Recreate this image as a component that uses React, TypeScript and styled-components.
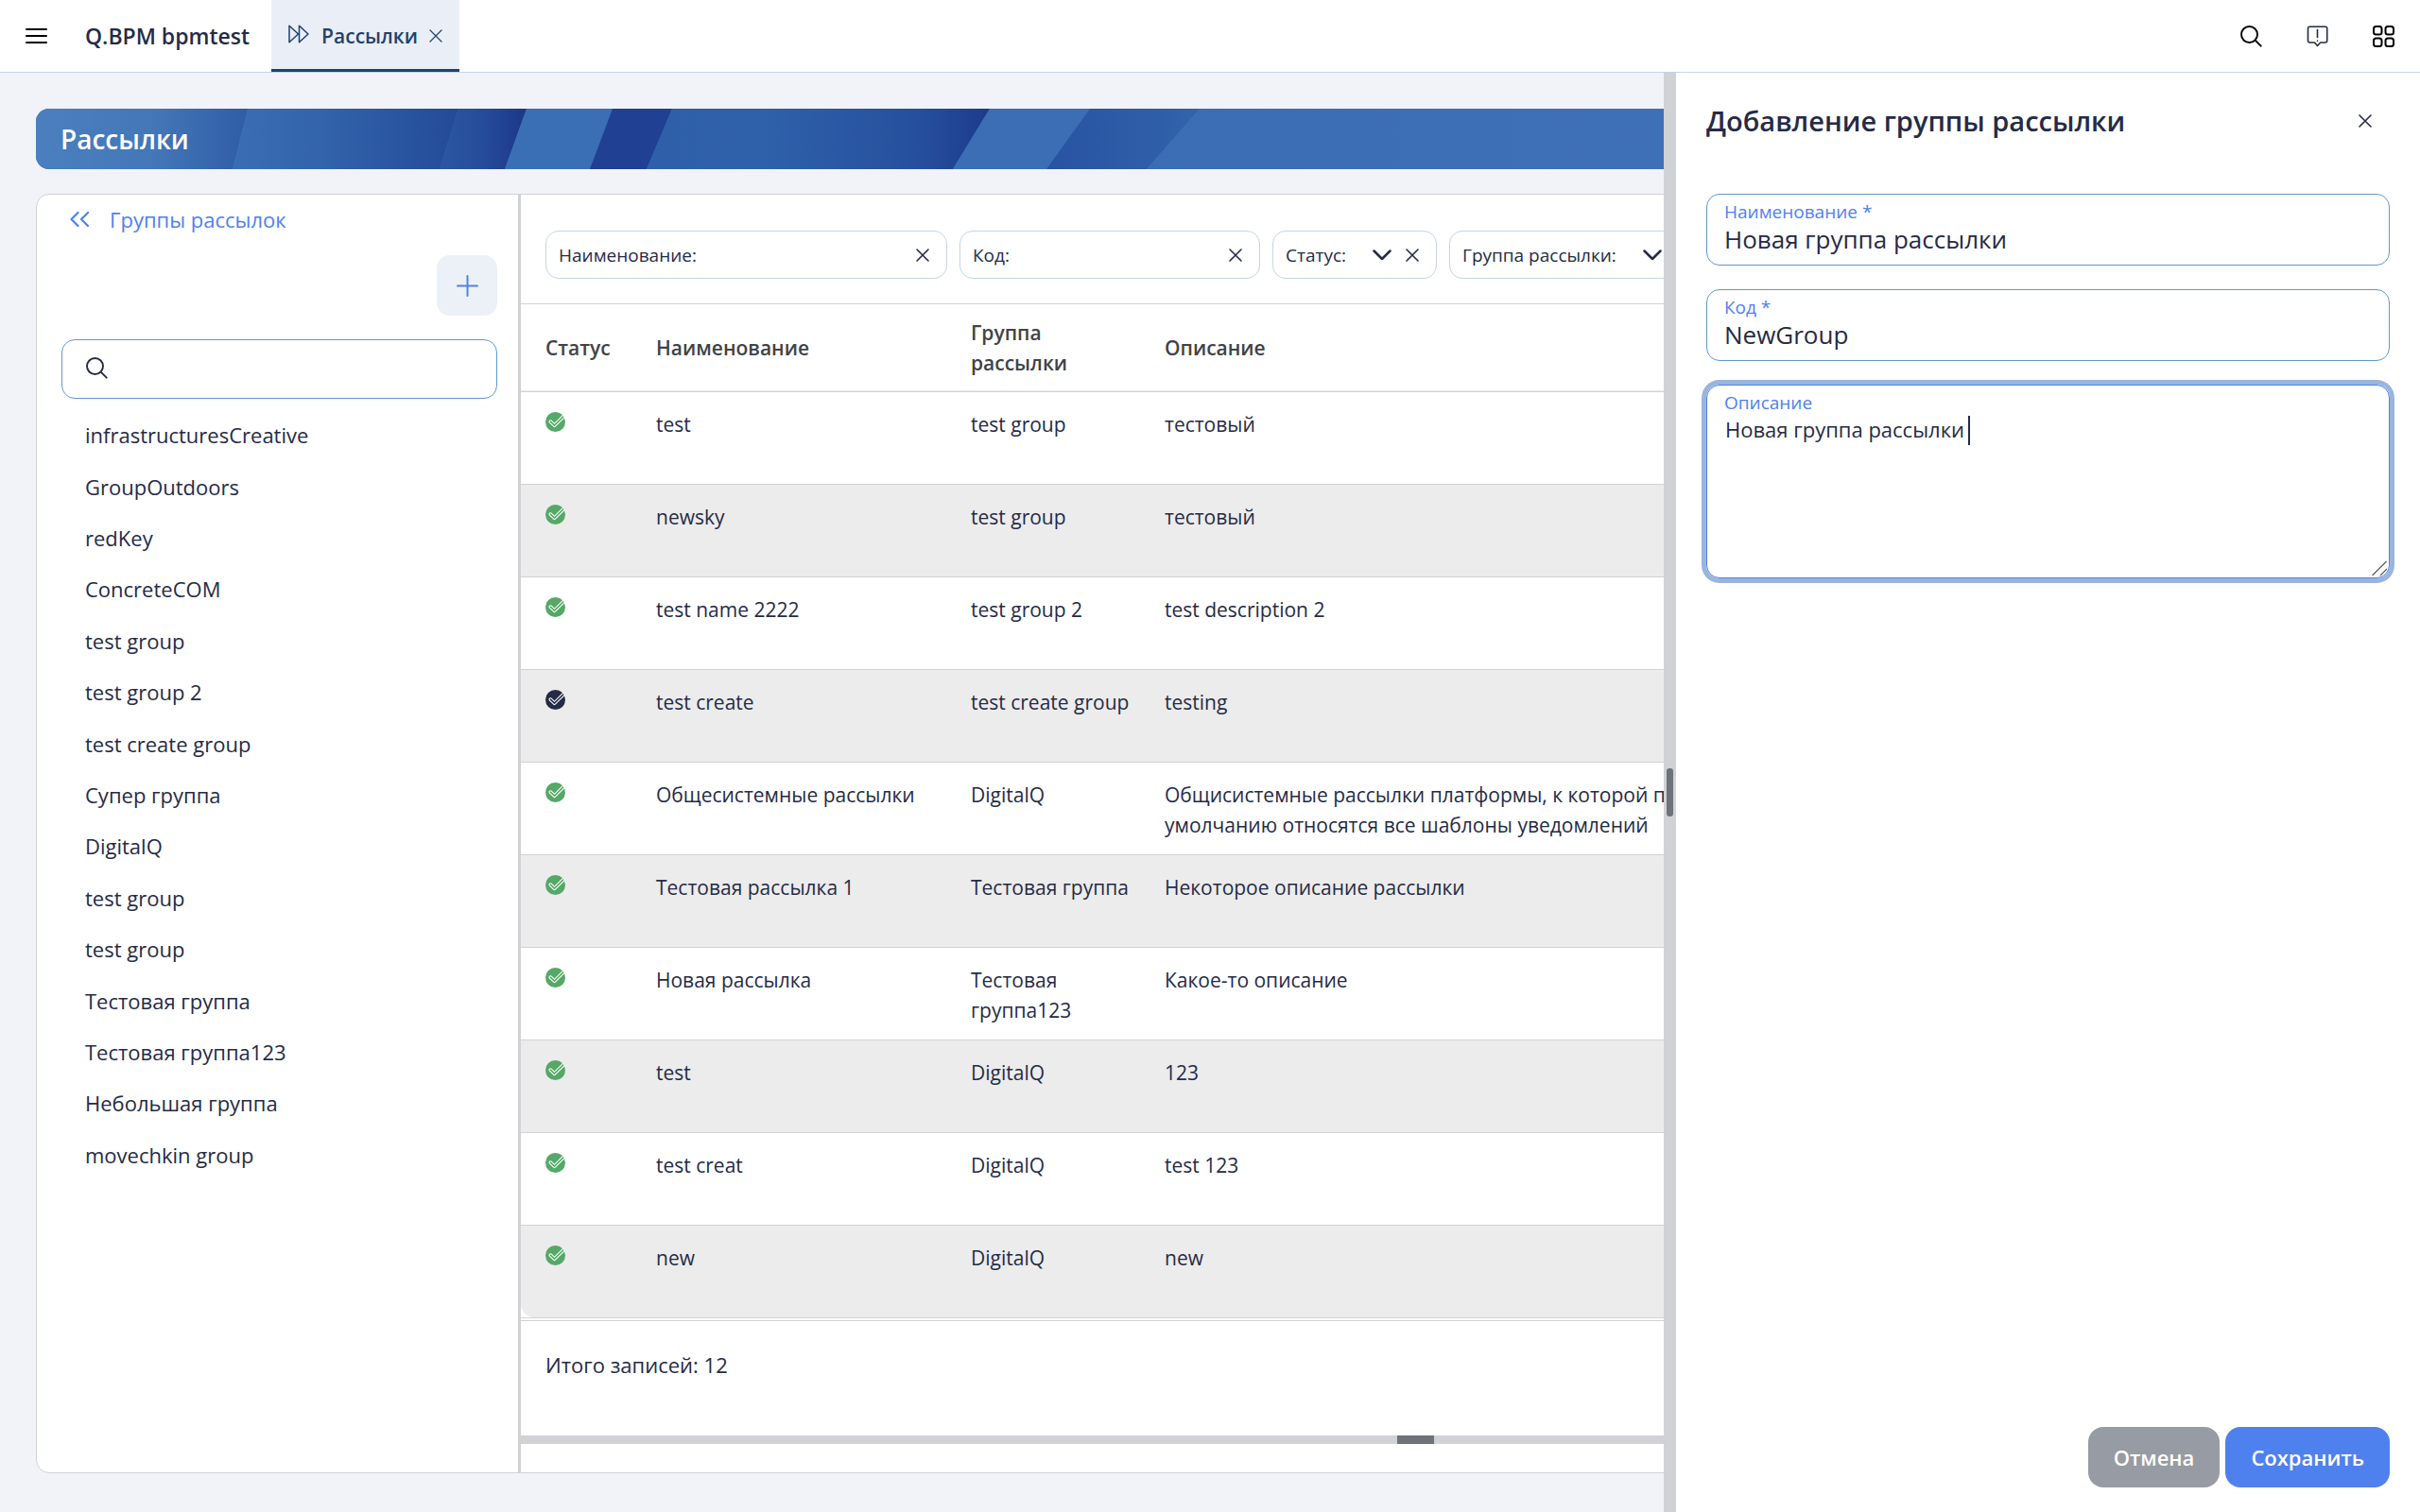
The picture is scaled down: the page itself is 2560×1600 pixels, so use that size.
import React from "react";
import styled, { createGlobalStyle } from "styled-components";

const ink = "#252b46";
const line = "#d0d2d5";
const accent = "#4f81ee";
const navy = "#1f426e";

const GlobalStyle = createGlobalStyle`
  *, *::before, *::after { box-sizing: border-box; }
  body { margin: 0; background: #f1f3f8; }
  body, button, input, select, textarea {
    font-family: "Open Sans", "Noto Sans", sans-serif;
    color: ${ink};
  }
  svg { display: block; flex: none; }
`;

const Page = styled.div`
  height: 100vh;
  display: flex;
  flex-direction: column;
  overflow: hidden;
`;

const PlainButton = styled.button`
  display: flex;
  align-items: center;
  justify-content: center;
  padding: 0;
  border: 0;
  background: none;
  color: inherit;
  cursor: pointer;
`;

/* ---------- top bar ---------- */

const TopBar = styled.header`
  flex: none;
  display: flex;
  align-items: stretch;
  height: 77px;
  padding: 0 27px;
  background: #fff;
  border-bottom: 1px solid #c3d5ea;
`;

const Brand = styled.div`
  display: flex;
  align-items: center;
  margin: 0 23px 0 40px;
  font-size: 23px;
  font-weight: 600;
  line-height: 32px;
`;

const Tab = styled.div`
  display: flex;
  align-items: center;
  gap: 12px;
  padding: 2px 18px 0;
  background: #eaeef6;
  border-bottom: 3px solid ${navy};
  color: ${navy};
`;

const TabLink = styled.a`
  display: flex;
  align-items: center;
  gap: 13px;
  color: inherit;
  font-size: 21px;
  font-weight: 600;
  line-height: 32px;
  text-decoration: none;
`;

const TopActions = styled.div`
  display: flex;
  align-items: center;
  gap: 47px;
  margin-left: auto;
`;

/* ---------- workspace ---------- */

const Body = styled.div`
  position: relative;
  flex: 1;
  min-height: 0;
  display: flex;
`;

const Workspace = styled.main`
  flex: 1;
  min-width: 0;
  display: flex;
  flex-direction: column;
  gap: 26px;
  padding: 38px 38px 41px;
`;

const Banner = styled.div`
  flex: none;
  display: grid;
  align-items: center;
  height: 64px;
  overflow: hidden;
  border-radius: 14px;
  background: #3b6db5;

  > * { grid-area: 1 / 1; }
`;

const BannerTitle = styled.h1`
  margin: 0;
  padding-left: 26px;
  color: #fff;
  font-size: 28px;
  font-weight: 600;
  line-height: 40px;
`;

const Card = styled.section`
  flex: 1;
  min-height: 0;
  display: flex;
  overflow: hidden;
  background: #fff;
  border: 1px solid ${line};
  border-radius: 14px;
`;

/* ---------- groups panel ---------- */

const Groups = styled.aside`
  flex: none;
  width: 512px;
  padding: 0 22px 0 26px;
  border-right: 3px solid ${line};
`;

const BackLink = styled.a`
  display: flex;
  align-items: center;
  gap: 22px;
  height: 51px;
  padding-left: 9px;
  color: ${accent};
  font-size: 22px;
  line-height: 32px;
  text-decoration: none;
`;

const AddButton = styled(PlainButton)`
  width: 64px;
  height: 64px;
  margin: 13px 0 25px auto;
  border-radius: 14px;
  background: #ebf1f7;
  color: ${accent};
`;

const SearchBox = styled.label`
  display: flex;
  align-items: center;
  gap: 16px;
  height: 63px;
  padding: 0 25px 2px;
  border: 1px solid #6297cc;
  border-radius: 14px;
`;

const BareInput = styled.input`
  flex: 1;
  min-width: 0;
  width: 0;
  padding: 0;
  border: 0;
  outline: 0;
  background: none;
  font-size: 21px;
  line-height: 32px;
`;

const GroupList = styled.ul`
  display: grid;
  grid-auto-rows: 1fr;
  height: 816px;
  margin: 11px 0 0;
  padding: 0 0 0 25px;
  list-style: none;
`;

const GroupItem = styled.li`
  display: flex;
  align-items: center;
  font-size: 22px;
  line-height: 32px;
`;

/* ---------- mailing list ---------- */

const Mailings = styled.div`
  flex: 1;
  min-width: 0;
  display: flex;
  flex-direction: column;
`;

const FilterBar = styled.div`
  flex: none;
  display: flex;
  gap: 13px;
  padding: 38px 26px 26px;
  border-bottom: 1px solid ${line};
`;

const Filter = styled.div<{ $width?: number }>`
  flex: none;
  display: flex;
  align-items: center;
  width: ${(p) => (p.$width ? `${p.$width}px` : "auto")};
  height: 51px;
  padding: 0 18px 0 13px;
  border: 1px solid #c3d5ea;
  border-radius: 14px;
  font-size: 19px;
  line-height: 32px;
`;

const FilterSelect = styled.div`
  display: grid;
  align-items: center;
  justify-items: end;
  width: 48px;
  margin-right: 15px;

  > * { grid-area: 1 / 1; }
  svg { pointer-events: none; }
`;

const BareSelect = styled.select`
  width: 100%;
  height: 32px;
  padding: 0;
  border: 0;
  outline: 0;
  appearance: none;
  background: none;
  font-size: 19px;
`;

const TableArea = styled.div`
  flex: 1;
  min-height: 0;
  overflow: hidden;
`;

const Table = styled.table`
  width: 100%;
  table-layout: fixed;
  border-collapse: separate;
  border-spacing: 0;
  border-bottom: 1px solid ${line};
  font-size: 21px;
  line-height: 32px;
  text-align: left;
`;

const Col = styled.col<{ $width?: number }>`
  width: ${(p) => (p.$width ? `${p.$width}px` : "auto")};
`;

const HeadCell = styled.th`
  height: 93px;
  padding: 0 32px 0 0;
  border-bottom: 1px solid ${line};
  box-shadow: inset 0 -1px #ececec;
  color: #404347;
  font-weight: 600;
  vertical-align: middle;

  &:first-child { padding: 0 0 0 26px; }
`;

const Cell = styled.td`
  height: 98px;
  padding: 18px 32px 0 0;
  border-bottom: 1px solid ${line};
  vertical-align: top;

  &:first-child { padding: 21px 0 0 26px; }
`;

const Row = styled.tr`
  &:nth-child(even) td { background: #ececec; }
  &:last-child td { height: 97px; border-bottom: 0; }
  &:last-child td:first-child { border-bottom-left-radius: 14px; }
`;

const Summary = styled.div`
  flex: none;
  height: 122px;
  padding: 30px 26px 0;
  border-top: 1px solid ${line};
  font-size: 22px;
  line-height: 32px;
`;

const BottomGutter = styled.div`
  flex: none;
  display: flex;
  justify-content: center;
  height: 9px;
  margin-bottom: 30px;
  padding-right: 78px;
  background: ${line};
`;

const BottomGrip = styled.span`
  width: 39px;
  background: #6c737a;
`;

/* ---------- drawer ---------- */

const Drawer = styled.aside`
  position: absolute;
  top: 0;
  right: 0;
  bottom: 0;
  display: flex;
  width: 800px;
  background: #fff;
`;

const SideGutter = styled.div`
  flex: none;
  display: flex;
  align-items: center;
  justify-content: center;
  width: 13px;
  background: ${line};
`;

const SideGrip = styled.span`
  width: 7px;
  height: 51px;
  border-radius: 3px;
  background: #6c737a;
`;

const Form = styled.form`
  flex: 1;
  min-width: 0;
  display: flex;
  flex-direction: column;
  padding: 26px 32px;
`;

const FormHead = styled.div`
  display: flex;
  align-items: center;
  justify-content: space-between;
  height: 50px;
  margin-bottom: 52px;
  padding-right: 19px;
`;

const FormTitle = styled.h2`
  margin: 0;
  font-size: 29px;
  font-weight: 600;
  line-height: 40px;
`;

const Field = styled.div<{ $tall?: boolean; $focused?: boolean }>`
  position: relative;
  display: flex;
  flex-direction: column;
  height: ${(p) => (p.$tall ? 205 : 76)}px;
  margin-bottom: 25px;
  padding-top: 6px;
  border: 1px solid ${(p) => (p.$focused ? accent : "#6297cc")};
  border-radius: 14px;
  box-shadow: ${(p) => (p.$focused ? "0 0 0 5px #9ab5dc" : "none")};
`;

const FieldLabel = styled.label`
  padding-left: 18px;
  color: ${accent};
  font-size: 19px;
  line-height: 24px;
`;

const FieldInput = styled.input`
  padding: 0 18px;
  border: 0;
  outline: 0;
  background: none;
  font-size: 26px;
  line-height: 34px;
`;

const FieldText = styled.textarea`
  flex: 1;
  padding: 0 19px;
  border: 0;
  outline: 0;
  resize: none;
  background: none;
  font-size: 22px;
  line-height: 32px;
`;

const Caret = styled.span`
  position: absolute;
  top: 32px;
  left: 276px;
  width: 2px;
  height: 31px;
  background: ${ink};
`;

const ResizeCorner = styled.span`
  position: absolute;
  right: 1px;
  bottom: 1px;
  cursor: ns-resize;
`;

const Actions = styled.div`
  display: flex;
  justify-content: flex-end;
  gap: 6px;
  margin-top: auto;
`;

const ActionButton = styled.button<{ $primary?: boolean }>`
  height: 64px;
  padding: 0 27px;
  border: 0;
  border-radius: 16px;
  background: ${(p) => (p.$primary ? accent : "#979ba3")};
  color: #fff;
  font-size: 22px;
  font-weight: 600;
  line-height: 32px;
  cursor: pointer;
`;

/* ---------- drawings ---------- */

const Cross = ({ width = 1.6 }: { width?: number }) => (
  <svg width="14" height="14" viewBox="0 0 14 14" fill="none" stroke="currentColor" strokeWidth={width} strokeLinecap="round">
    <path d="M1 1 13 13M13 1 1 13" />
  </svg>
);

const Lens = ({ color }: { color: string }) => (
  <svg width="23" height="23" viewBox="0 0 23 23" fill="none" stroke={color} strokeWidth="1.9" strokeLinecap="round">
    <circle cx="9.5" cy="9.5" r="8.5" />
    <path d="m15.7 15.7 6 6" />
  </svg>
);

const Menu = () => (
  <svg width="23" height="17" viewBox="0 0 23 17" stroke="#000" strokeWidth="2" strokeLinecap="round">
    <path d="M1 1h21M1 8h21M1 15h21" />
  </svg>
);

const Forward = () => (
  <svg width="22" height="24" viewBox="0 0 22 24" fill="none" stroke="currentColor" strokeWidth="1.5" strokeLinejoin="round">
    <path d="M1 1.200v17.600l9.500-8.800zM11.500 1.200v17.600l9.500-8.800z" />
  </svg>
);

const Notice = () => (
  <svg width="23" height="23" viewBox="0 0 23 23" fill="none" stroke={ink} strokeWidth="1.6" strokeLinejoin="round" strokeLinecap="round">
    <path d="M3 1.300h17a1.700 1.700 0 0 1 1.700 1.700v13a2 2 0 0 1-2 2h-5L11.500 21.500 8.500 18h-5a2 2 0 0 1-2-2V3A1.700 1.700 0 0 1 3 1.300z" />
    <path d="M11.500 4.500v8M11.500 16v.2" />
  </svg>
);

const Tiles = () => (
  <svg width="23" height="23" viewBox="0 0 23 23" fill="none" stroke="#000" strokeWidth="2">
    <rect x="1" y="1" width="8.500" height="8.500" rx="2.500" />
    <rect x="13.500" y="1" width="8.500" height="8.500" rx="2.500" />
    <rect x="1" y="13.500" width="8.500" height="8.500" rx="2.500" />
    <rect x="13.500" y="13.500" width="8.500" height="8.500" rx="2.500" />
  </svg>
);

const Back = () => (
  <svg width="20" height="16" viewBox="0 0 20 16" fill="none" stroke="currentColor" strokeWidth="2.2" strokeLinecap="round" strokeLinejoin="round">
    <path d="M8.500 1 1.500 8l7 7M19 1l-7 7 7 7" />
  </svg>
);

const Plus = () => (
  <svg width="23" height="23" viewBox="0 0 23 23" stroke="currentColor" strokeWidth="2" strokeLinecap="round">
    <path d="M11.500 1v21M1 11.500h21" />
  </svg>
);

const Chevron = () => (
  <svg width="20" height="12" viewBox="0 0 20 12" fill="none" stroke={ink} strokeWidth="2.500" strokeLinecap="round" strokeLinejoin="round">
    <path d="m1.500 1.500 8.500 8.500 8.500-8.500" />
  </svg>
);

const CornerLines = () => (
  <svg width="17" height="17" viewBox="0 0 17 17" stroke="#5c5c5c" strokeWidth="1.200">
    <path d="M.5 16 15.500 1M9 16l7-7" />
  </svg>
);

const Status = ({ active }: { active: boolean }) => (
  <svg width="21" height="21" viewBox="0 0 21 21" role="img" aria-label={active ? "Активна" : "Неактивна"}>
    <circle cx="10.500" cy="10.500" r="10.500" fill={active ? "#55a867" : ink} />
    <path
      d="M19 2.800 9.500 12.300 6.300 9.200a1.300 1.300 0 0 0-1.900 1.900l4.200 4.100a1.300 1.300 0 0 0 1.800 0L20.300 5.300"
      fill="none"
      stroke="#fff"
      strokeWidth="1.100"
    />
  </svg>
);

const BannerArt = () => (
  <svg width="2484" height="64" viewBox="0 0 2484 64" aria-hidden="true">
    <defs>
      <linearGradient id="b1"><stop offset="0" stopColor="#4b7fbe" /><stop offset=".55" stopColor="#4477b8" /><stop offset="1" stopColor="#2f5ca6" /></linearGradient>
      <linearGradient id="b2"><stop offset="0" stopColor="#3a6eb4" /><stop offset=".4" stopColor="#3263ab" /><stop offset="1" stopColor="#234a98" /></linearGradient>
      <linearGradient id="b3"><stop offset="0" stopColor="#2b57a2" /><stop offset=".5" stopColor="#254c9a" /><stop offset="1" stopColor="#1c3688" /></linearGradient>
      <linearGradient id="b4"><stop offset="0" stopColor="#2f5fa9" /><stop offset=".35" stopColor="#2f60aa" /><stop offset=".8" stopColor="#254f9c" /><stop offset="1" stopColor="#1d3a8c" /></linearGradient>
      <linearGradient id="b5"><stop offset="0" stopColor="#2753a0" /><stop offset="1" stopColor="#3363ac" /></linearGradient>
      <linearGradient id="b6"><stop offset="0" stopColor="#3b6db5" /><stop offset="1" stopColor="#4374ba" /></linearGradient>
    </defs>
    <path d="M0 0h224l-16 64H0z" fill="url(#b1)" />
    <path d="M224 0h223l-20 64H208z" fill="url(#b2)" />
    <path d="M447 0h72l-23 64h-69z" fill="url(#b3)" />
    <path d="M519 0h91l-24 64h-90z" fill="#3b6fb5" />
    <path d="M610 0h63l-27 64h-60z" fill="#1f4093" />
    <path d="M673 0h336l-39 64H646z" fill="url(#b4)" />
    <path d="M1009 0h106l-46 64h-99z" fill="#3b6eb4" />
    <path d="M1115 0h116l-56 64h-106z" fill="url(#b5)" />
    <path d="M1231 0h1253v64H1175z" fill="url(#b6)" />
  </svg>
);

/* ---------- data ---------- */

const groups = [
  "infrastructuresCreative", "GroupOutdoors", "redKey", "ConcreteCOM", "test group",
  "test group 2", "test create group", "Супер группа", "DigitalQ", "test group",
  "test group", "Тестовая группа", "Тестовая группа123", "Небольшая группа", "movechkin group",
];

const mailings = [
  { active: true, name: "test", group: "test group", text: "тестовый" },
  { active: true, name: "newsky", group: "test group", text: "тестовый" },
  { active: true, name: "test name 2222", group: "test group 2", text: "test description 2" },
  { active: false, name: "test create", group: "test create group", text: "testing" },
  { active: true, name: "Общесистемные рассылки", group: "DigitalQ", text: "Общисистемные рассылки платформы, к которой по умолчанию относятся все шаблоны уведомлений" },
  { active: true, name: "Тестовая рассылка 1", group: "Тестовая группа", text: "Некоторое описание рассылки" },
  { active: true, name: "Новая рассылка", group: "Тестовая группа123", text: "Какое-то описание" },
  { active: true, name: "test", group: "DigitalQ", text: "123" },
  { active: true, name: "test creat", group: "DigitalQ", text: "test 123" },
  { active: true, name: "new", group: "DigitalQ", text: "new" },
];

const TextFilter = ({ id, label, width }: { id: string; label: string; width: number }) => (
  <Filter $width={width}>
    <label htmlFor={id}>{label}</label>
    <BareInput id={id} />
    <PlainButton type="button" aria-label="Очистить"><Cross /></PlainButton>
  </Filter>
);

const SelectFilter = ({ id, label }: { id: string; label: string }) => (
  <Filter>
    <label htmlFor={id}>{label}</label>
    <FilterSelect>
      <BareSelect id={id}><option value="" /></BareSelect>
      <Chevron />
    </FilterSelect>
    <PlainButton type="button" aria-label="Очистить"><Cross /></PlainButton>
  </Filter>
);

export default function App() {
  return (
    <Page>
      <GlobalStyle />
      <TopBar>
        <PlainButton aria-label="Меню"><Menu /></PlainButton>
        <Brand>Q.BPM bpmtest</Brand>
        <Tab>
          <TabLink href="#mailings"><Forward />Рассылки</TabLink>
          <PlainButton aria-label="Закрыть вкладку"><Cross width={1.2} /></PlainButton>
        </Tab>
        <TopActions>
          <PlainButton aria-label="Поиск"><Lens color="#000" /></PlainButton>
          <PlainButton aria-label="Уведомления"><Notice /></PlainButton>
          <PlainButton aria-label="Приложения"><Tiles /></PlainButton>
        </TopActions>
      </TopBar>

      <Body>
        <Workspace>
          <Banner>
            <BannerArt />
            <BannerTitle>Рассылки</BannerTitle>
          </Banner>
          <Card>
            <Groups>
              <BackLink href="#groups"><Back />Группы рассылок</BackLink>
              <AddButton aria-label="Добавить группу"><Plus /></AddButton>
              <SearchBox>
                <Lens color={ink} />
                <BareInput type="text" aria-label="Поиск группы" />
              </SearchBox>
              <GroupList>
                {groups.map((g, i) => <GroupItem key={i}>{g}</GroupItem>)}
              </GroupList>
            </Groups>

            <Mailings>
              <FilterBar>
                <TextFilter id="f-name" label="Наименование:" width={425} />
                <TextFilter id="f-code" label="Код:" width={318} />
                <SelectFilter id="f-status" label="Статус:" />
                <SelectFilter id="f-group" label="Группа рассылки:" />
              </FilterBar>
              <TableArea>
                <Table>
                  <colgroup>
                    <Col $width={143} />
                    <Col $width={333} />
                    <Col $width={205} />
                    <Col $width={620} />
                    <Col />
                  </colgroup>
                  <thead>
                    <tr>
                      <HeadCell>Статус</HeadCell>
                      <HeadCell>Наименование</HeadCell>
                      <HeadCell>Группа рассылки</HeadCell>
                      <HeadCell>Описание</HeadCell>
                      <HeadCell />
                    </tr>
                  </thead>
                  <tbody>
                    {mailings.map((m, i) => (
                      <Row key={i}>
                        <Cell><Status active={m.active} /></Cell>
                        <Cell>{m.name}</Cell>
                        <Cell>{m.group}</Cell>
                        <Cell>{m.text}</Cell>
                        <Cell />
                      </Row>
                    ))}
                  </tbody>
                </Table>
              </TableArea>
              <Summary>Итого записей: 12</Summary>
              <BottomGutter><BottomGrip /></BottomGutter>
            </Mailings>
          </Card>
        </Workspace>

        <Drawer>
          <SideGutter><SideGrip /></SideGutter>
          <Form>
            <FormHead>
              <FormTitle>Добавление группы рассылки</FormTitle>
              <PlainButton type="button" aria-label="Закрыть"><Cross /></PlainButton>
            </FormHead>
            <Field>
              <FieldLabel htmlFor="g-name">Наименование *</FieldLabel>
              <FieldInput id="g-name" defaultValue="Новая группа рассылки" />
            </Field>
            <Field>
              <FieldLabel htmlFor="g-code">Код *</FieldLabel>
              <FieldInput id="g-code" defaultValue="NewGroup" />
            </Field>
            <Field $tall $focused>
              <FieldLabel htmlFor="g-text">Описание</FieldLabel>
              <FieldText id="g-text" defaultValue="Новая группа рассылки" />
              <Caret />
              <ResizeCorner><CornerLines /></ResizeCorner>
            </Field>
            <Actions>
              <ActionButton type="button">Отмена</ActionButton>
              <ActionButton type="button" $primary>Сохранить</ActionButton>
            </Actions>
          </Form>
        </Drawer>
      </Body>
    </Page>
  );
}
